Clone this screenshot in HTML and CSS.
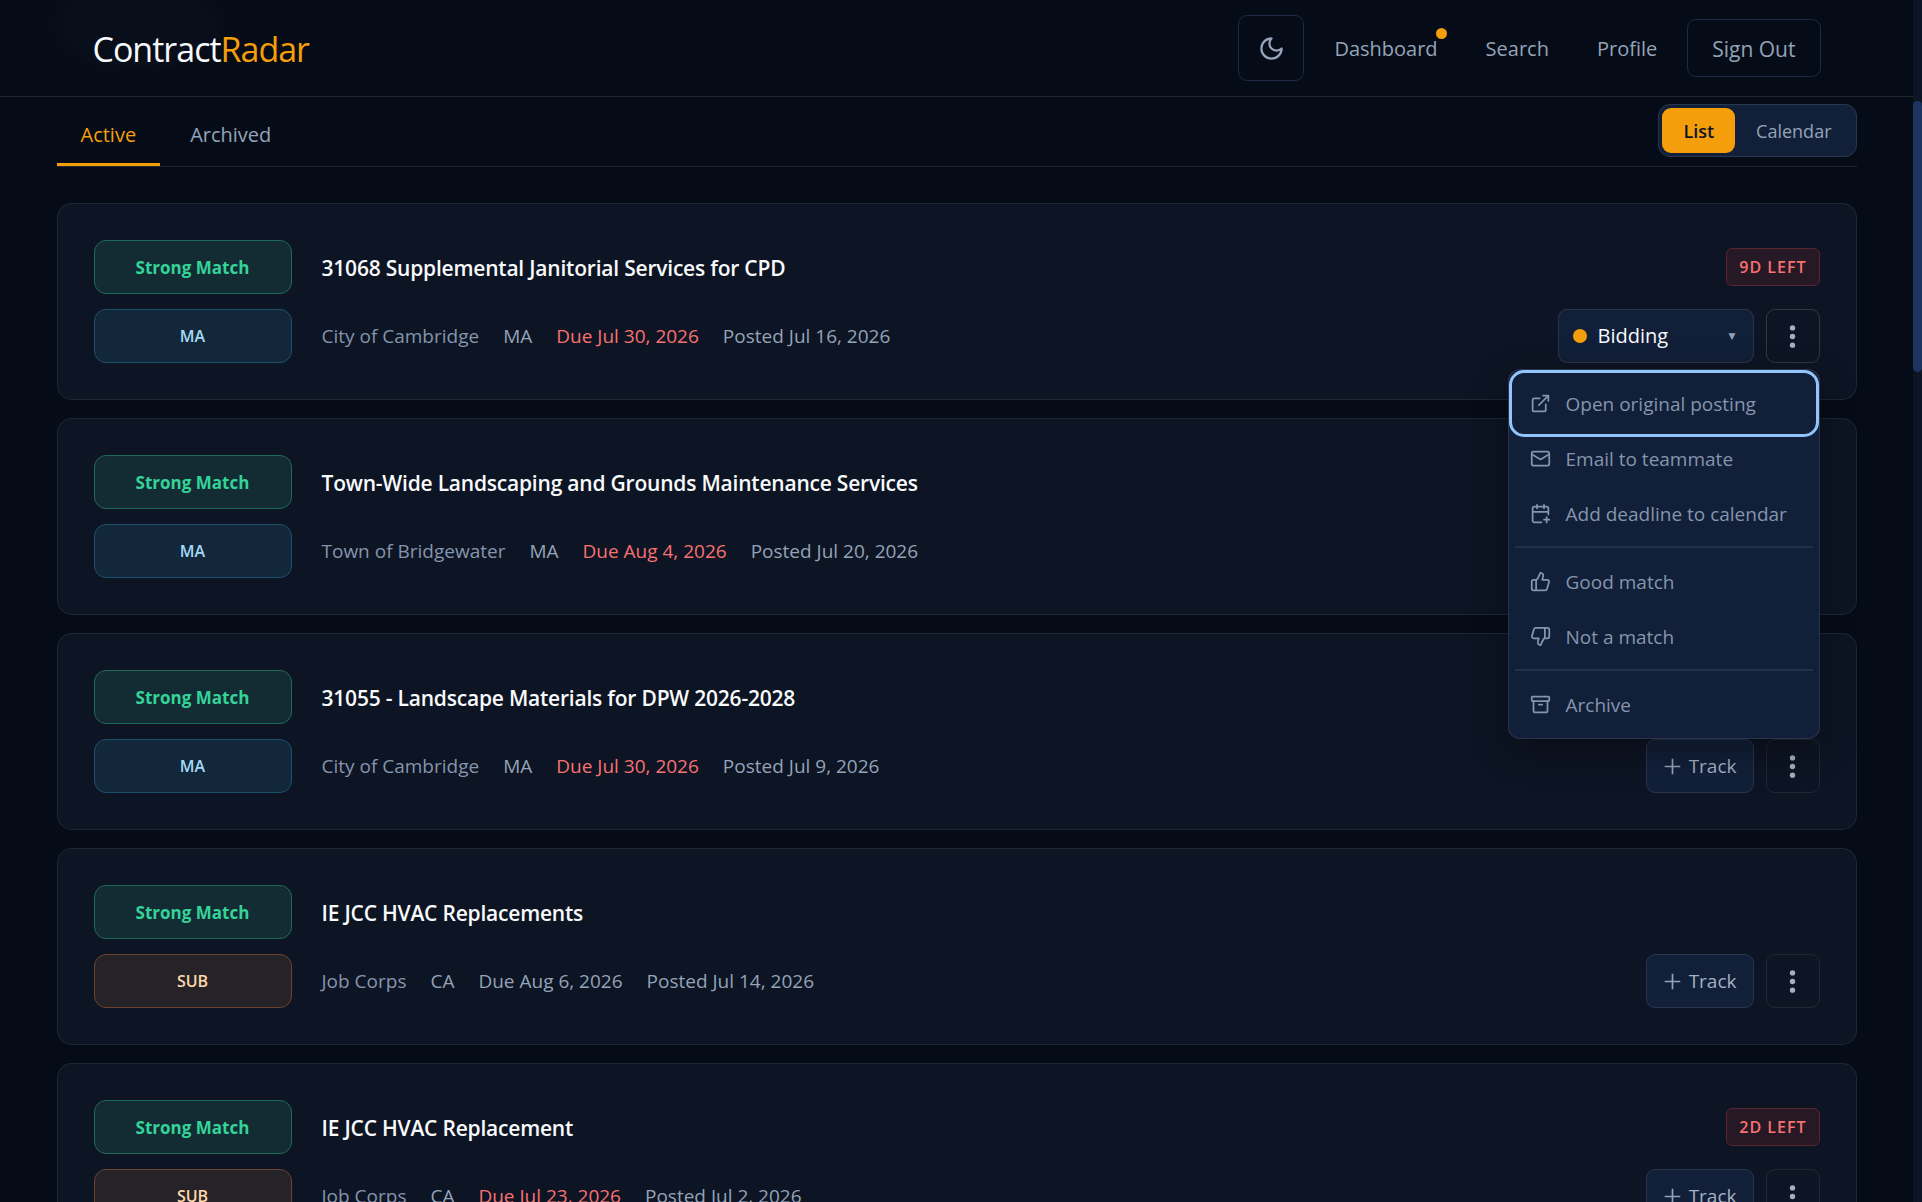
FILE: index.html
```html
<!DOCTYPE html>
<html lang="en">
<head>
    <meta charset="UTF-8">
    <meta name="viewport" content="width=device-width, initial-scale=1.0">
    <title>ContractRadar</title>
    <link rel="stylesheet" href="styles.css">
</head>
<body>
    <!-- Shared icons -->
    <svg class="icon-defs" aria-hidden="true">
        <symbol id="icon-dots" viewBox="0 0 24 24">
            <circle cx="12" cy="3" r="2.8" /><circle cx="12" cy="12" r="2.8" /><circle cx="12" cy="21" r="2.8" />
        </symbol>
        <symbol id="icon-plus" viewBox="0 0 24 24">
            <path d="M12 1v22M1 12h22" />
        </symbol>
    </svg>

    <div class="app">
        <header class="header">
            <div class="container header-inner">
                <a class="logo" href="#">Contract<span>Radar</span></a>
                <nav class="nav">
                    <button class="theme-toggle" type="button" aria-label="Toggle theme">
                        <svg class="icon icon-lg" viewBox="0 0 24 24"><path d="M12 3a6 6 0 0 0 9 9 9 9 0 1 1-9-9Z" /></svg>
                    </button>
                    <a class="nav-link has-dot" href="#">Dashboard</a>
                    <a class="nav-link" href="#">Search</a>
                    <a class="nav-link" href="#">Profile</a>
                    <button class="sign-out" type="button">Sign Out</button>
                </nav>
            </div>
        </header>

        <main class="container">
            <div class="toolbar">
                <div class="tabs">
                    <button class="tab active" type="button">Active</button>
                    <button class="tab" type="button">Archived</button>
                </div>
                <div class="view-switch">
                    <button class="view-btn active" type="button">List</button>
                    <button class="view-btn" type="button">Calendar</button>
                </div>
            </div>

            <div class="cards">
                <article class="card">
                    <div class="badges">
                        <span class="badge badge-match">Strong Match</span>
                        <span class="badge badge-state">MA</span>
                    </div>
                    <div class="details">
                        <h2 class="title">31068 Supplemental Janitorial Services for CPD</h2>
                        <div class="meta">
                            <span class="agency">City of Cambridge</span>
                            <span>MA</span>
                            <span class="urgent">Due Jul 30, 2026</span>
                            <span>Posted Jul 16, 2026</span>
                        </div>
                    </div>
                    <div class="side">
                        <div class="side-top"><span class="days-left">9D LEFT</span></div>
                        <div class="actions">
                            <label class="status">
                                <span class="status-dot"></span>
                                <select class="status-select" aria-label="Status">
                                    <option>Bidding</option>
                                    <option>Submitted</option>
                                </select>
                                <span class="caret">▼</span>
                            </label>
                            <button class="more open" type="button" aria-label="More actions"><svg class="dots"><use href="#icon-dots" /></svg></button>
                            <div class="menu">
                                <button class="menu-item focused" type="button">
                                    <svg class="icon" viewBox="0 0 24 24"><path d="M15 3h6v6M10 14 21 3M18 13v6a2 2 0 0 1-2 2H5a2 2 0 0 1-2-2V8a2 2 0 0 1 2-2h6" /></svg>
                                    Open original posting
                                </button>
                                <button class="menu-item" type="button">
                                    <svg class="icon" viewBox="0 0 24 24"><rect x="2" y="4" width="20" height="16" rx="2" /><path d="m22 7-8.97 5.7a1.94 1.94 0 0 1-2.06 0L2 7" /></svg>
                                    Email to teammate
                                </button>
                                <button class="menu-item" type="button">
                                    <svg class="icon" viewBox="0 0 24 24"><path d="M8 2v4M16 2v4M21 13V6a2 2 0 0 0-2-2H5a2 2 0 0 0-2 2v14a2 2 0 0 0 2 2h8M3 10h18M16 19h6M19 16v6" /></svg>
                                    Add deadline to calendar
                                </button>
                                <hr class="divider">
                                <button class="menu-item" type="button">
                                    <svg class="icon" viewBox="0 0 24 24"><path d="M7 10v12M15 5.88 14 10h5.83a2 2 0 0 1 1.92 2.56l-2.33 8A2 2 0 0 1 17.5 22H4a2 2 0 0 1-2-2v-8a2 2 0 0 1 2-2h2.76a2 2 0 0 0 1.79-1.11L12 2a3.13 3.13 0 0 1 3 3.88Z" /></svg>
                                    Good match
                                </button>
                                <button class="menu-item" type="button">
                                    <svg class="icon" viewBox="0 0 24 24"><path d="M17 14V2M9 18.12 10 14H4.17a2 2 0 0 1-1.92-2.56l2.33-8A2 2 0 0 1 6.5 2H20a2 2 0 0 1 2 2v8a2 2 0 0 1-2 2h-2.76a2 2 0 0 0-1.79 1.11L12 22a3.13 3.13 0 0 1-3-3.88Z" /></svg>
                                    Not a match
                                </button>
                                <hr class="divider">
                                <button class="menu-item" type="button">
                                    <svg class="icon" viewBox="0 0 24 24"><rect x="2" y="3" width="20" height="5" rx="1" /><path d="M4 8v11a2 2 0 0 0 2 2h12a2 2 0 0 0 2-2V8M10 12h4" /></svg>
                                    Archive
                                </button>
                            </div>
                        </div>
                    </div>
                </article>

                <article class="card">
                    <div class="badges">
                        <span class="badge badge-match">Strong Match</span>
                        <span class="badge badge-state">MA</span>
                    </div>
                    <div class="details">
                        <h2 class="title">Town-Wide Landscaping and Grounds Maintenance Services</h2>
                        <div class="meta">
                            <span class="agency">Town of Bridgewater</span>
                            <span>MA</span>
                            <span class="urgent">Due Aug 4, 2026</span>
                            <span>Posted Jul 20, 2026</span>
                        </div>
                    </div>
                </article>

                <article class="card">
                    <div class="badges">
                        <span class="badge badge-match">Strong Match</span>
                        <span class="badge badge-state">MA</span>
                    </div>
                    <div class="details">
                        <h2 class="title">31055 - Landscape Materials for DPW 2026-2028</h2>
                        <div class="meta">
                            <span class="agency">City of Cambridge</span>
                            <span>MA</span>
                            <span class="urgent">Due Jul 30, 2026</span>
                            <span>Posted Jul 9, 2026</span>
                        </div>
                    </div>
                    <div class="side">
                        <div class="side-top"></div>
                        <div class="actions">
                            <button class="track" type="button"><svg class="plus"><use href="#icon-plus" /></svg>Track</button>
                            <button class="more" type="button" aria-label="More actions"><svg class="dots"><use href="#icon-dots" /></svg></button>
                        </div>
                    </div>
                </article>

                <article class="card">
                    <div class="badges">
                        <span class="badge badge-match">Strong Match</span>
                        <span class="badge badge-sub">SUB</span>
                    </div>
                    <div class="details">
                        <h2 class="title">IE JCC HVAC Replacements</h2>
                        <div class="meta">
                            <span class="agency">Job Corps</span>
                            <span>CA</span>
                            <span>Due Aug 6, 2026</span>
                            <span>Posted Jul 14, 2026</span>
                        </div>
                    </div>
                    <div class="side">
                        <div class="side-top"></div>
                        <div class="actions">
                            <button class="track" type="button"><svg class="plus"><use href="#icon-plus" /></svg>Track</button>
                            <button class="more" type="button" aria-label="More actions"><svg class="dots"><use href="#icon-dots" /></svg></button>
                        </div>
                    </div>
                </article>

                <article class="card">
                    <div class="badges">
                        <span class="badge badge-match">Strong Match</span>
                        <span class="badge badge-sub">SUB</span>
                    </div>
                    <div class="details">
                        <h2 class="title">IE JCC HVAC Replacement</h2>
                        <div class="meta">
                            <span class="agency">Job Corps</span>
                            <span>CA</span>
                            <span class="urgent">Due Jul 23, 2026</span>
                            <span>Posted Jul 2, 2026</span>
                        </div>
                    </div>
                    <div class="side">
                        <div class="side-top"><span class="days-left">2D LEFT</span></div>
                        <div class="actions">
                            <button class="track" type="button"><svg class="plus"><use href="#icon-plus" /></svg>Track</button>
                            <button class="more" type="button" aria-label="More actions"><svg class="dots"><use href="#icon-dots" /></svg></button>
                        </div>
                    </div>
                </article>
            </div>
        </main>
    </div>
    <div class="scrollbar"><div class="thumb"></div></div>
</body>
</html>
```
FILE: styles.css
```css
:root {
    --bg: #060c17;
    --card: #0d1423;
    --surface: #111f38;
    --border: rgba(255, 255, 255, 0.1);
    --text: #f8fafc;
    --muted: #94a3b8;
    --soft: #8595ad;
    --amber: #f59e0b;
    --red: #f87171;
    --green: #34d399;
}

* {
    box-sizing: border-box;
    margin: 0;
    padding: 0;
}

body {
    display: flex;
    height: 100vh;
    overflow: hidden;
    background: var(--bg);
    color: var(--text);
    font-family: 'Segoe UI', 'Open Sans', 'Noto Sans', sans-serif;
    font-size: 19px;
    line-height: 28px;
}

button,
select {
    font: inherit;
    color: inherit;
    background: none;
    border: none;
    cursor: pointer;
}

a {
    color: inherit;
    text-decoration: none;
}

.icon-defs {
    position: absolute;
    width: 0;
    height: 0;
}

.app {
    flex: 1;
    overflow-y: auto;
    scrollbar-width: none;
}

.container {
    max-width: 1872px;
    margin: 0 auto;
    padding: 0 36px;
}

/* Header */
.header {
    position: sticky;
    top: 0;
    z-index: 5;
    border-bottom: 1px solid var(--border);
    background: radial-gradient(ellipse 90px 50px at 138px 25px, #080e1a 80%, transparent 100%) var(--bg);
}

.header-inner {
    display: flex;
    align-items: center;
    justify-content: space-between;
    height: 96px;
    padding: 0 72px;
}

.logo {
    padding-top: 2px;
    font-size: 34px;
    line-height: 48px;
    letter-spacing: -1px;
}

.logo span {
    color: var(--amber);
}

.nav {
    display: flex;
    align-items: center;
    gap: 12px;
    font-size: 21px;
    color: var(--muted);
}

.theme-toggle {
    display: grid;
    place-items: center;
    width: 66px;
    height: 66px;
    border: 1px solid #1e2942;
    border-radius: 9px;
}

.nav-link {
    position: relative;
    padding: 2px 18px 0;
    font-size: 20px;
}

.has-dot::after {
    content: '';
    position: absolute;
    top: -5px;
    right: 9px;
    width: 11px;
    height: 11px;
    border-radius: 50%;
    background: var(--amber);
}

.sign-out {
    height: 58px;
    padding: 2px 24px 0;
    border: 1px solid #1e2942;
    border-radius: 9px;
}

.icon {
    width: 21px;
    height: 21px;
    flex: none;
    fill: none;
    stroke: currentColor;
    stroke-width: 2;
    stroke-linecap: round;
    stroke-linejoin: round;
}

.icon-lg {
    width: 27px;
    height: 27px;
}

/* Tabs and view switch */
.toolbar {
    display: flex;
    justify-content: space-between;
    align-items: flex-end;
    height: 70px;
    border-bottom: 1px solid var(--border);
}

.tabs {
    display: flex;
    gap: 6px;
    font-size: 20px;
    color: var(--muted);
}

.tab {
    padding: 15px 24px 14px;
    border-bottom: 3px solid transparent;
}

.tab.active {
    color: var(--amber);
    border-color: var(--amber);
}

.view-switch {
    display: flex;
    margin-bottom: 9px;
    padding: 3px;
    border: 1px solid #29374e;
    border-radius: 12px;
    background: var(--surface);
    font-size: 18px;
    color: var(--muted);
}

.view-btn {
    height: 45px;
    padding: 0 21px;
    border-radius: 9px;
}

.view-btn.active {
    background: var(--amber);
    color: #0d1423;
    font-weight: 600;
}

/* Cards */
.cards {
    display: grid;
    gap: 18px;
    padding: 36px 0;
}

.card {
    display: flex;
    gap: 30px;
    padding: 36px;
    border: 1px solid rgba(255, 255, 255, 0.08);
    border-radius: 15px;
    background: var(--card);
}

.badges,
.details,
.side {
    display: grid;
    grid-template-rows: 54px 54px;
    row-gap: 15px;
    align-items: center;
}

.badges {
    width: 198px;
    flex: none;
}

.details {
    flex: 1;
}

.badge {
    display: grid;
    place-items: center;
    height: 54px;
    border: 1px solid;
    border-radius: 12px;
    font-weight: 700;
}

.badge-match {
    padding-top: 2px;
    border-color: #1f6b57;
    background: #132b33;
    color: var(--green);
    font-size: 17px;
}

.badge-state,
.badge-sub {
    font-size: 16px;
    font-weight: 600;
}

.badge-state {
    border-color: #1d506c;
    background: #13273a;
    color: #a5d8f5;
}

.badge-sub {
    border-color: #6b4330;
    background: #262328;
    color: #fed7aa;
}

.title {
    padding-top: 2px;
    font-size: 21px;
    font-weight: 600;
    letter-spacing: -0.01em;
}

.meta {
    display: flex;
    gap: 24px;
    color: var(--muted);
}

.agency {
    color: var(--soft);
}

.urgent {
    color: var(--red);
}

.side-top {
    justify-self: end;
}

.days-left {
    display: block;
    padding: 4px 12px;
    border: 1px solid #58242f;
    border-radius: 6px;
    background: #261925;
    color: var(--red);
    font-size: 16px;
    font-weight: 600;
    letter-spacing: 1px;
}

.actions {
    position: relative;
    display: flex;
    justify-content: flex-end;
    gap: 12px;
}

.status,
.track,
.more {
    display: flex;
    align-items: center;
    height: 54px;
    border: 1px solid rgba(255, 255, 255, 0.1);
    border-radius: 9px;
}

.status {
    gap: 11px;
    width: 196px;
    padding: 0 17px 0 14px;
    background: var(--surface);
    font-size: 20px;
    font-weight: 500;
}

.status-dot {
    width: 14px;
    height: 14px;
    border-radius: 50%;
    background: var(--amber);
}

.status-select {
    flex: 1;
    min-width: 0;
    appearance: none;
}

.caret {
    color: var(--muted);
    font-family: 'DejaVu Sans', sans-serif;
    font-size: 9px;
}

.track {
    gap: 8px;
    padding: 0 16px 0 17px;
    background: var(--surface);
    color: #a3b0c2;
}

.plus {
    width: 17px;
    height: 17px;
    fill: none;
    stroke: var(--muted);
    stroke-width: 2.4;
}

.more {
    justify-content: center;
    width: 54px;
    border-color: rgba(255, 255, 255, 0.08);
}

.more.open {
    border-color: rgba(255, 255, 255, 0.15);
}

.dots {
    width: 23px;
    height: 23px;
    fill: #a3b0c2;
}

/* Row menu */
.menu {
    position: absolute;
    top: 60px;
    right: 0;
    z-index: 2;
    width: 312px;
    padding: 6px;
    border: 1px solid rgba(255, 255, 255, 0.1);
    border-radius: 12px;
    background: var(--surface);
    box-shadow: 0 12px 36px rgba(0, 0, 0, 0.35);
}

.menu-item {
    display: flex;
    align-items: center;
    gap: 15px;
    width: 100%;
    height: 55px;
    padding: 0 15px;
    border-radius: 9px;
    color: var(--soft);
    font-size: 19px;
    white-space: nowrap;
}

.menu-item.focused {
    outline: 3px solid #93c5fd;
    outline-offset: 3px;
}

.divider {
    height: 2px;
    margin: 5px 0 6px;
    border: none;
    background: #22304a;
}

/* Scrollbar */
.scrollbar {
    flex: none;
    width: 9px;
    padding-top: 101px;
    background: #0d1423;
}

.thumb {
    height: 271px;
    border-radius: 5px;
    background: #1d3461;
}
```
